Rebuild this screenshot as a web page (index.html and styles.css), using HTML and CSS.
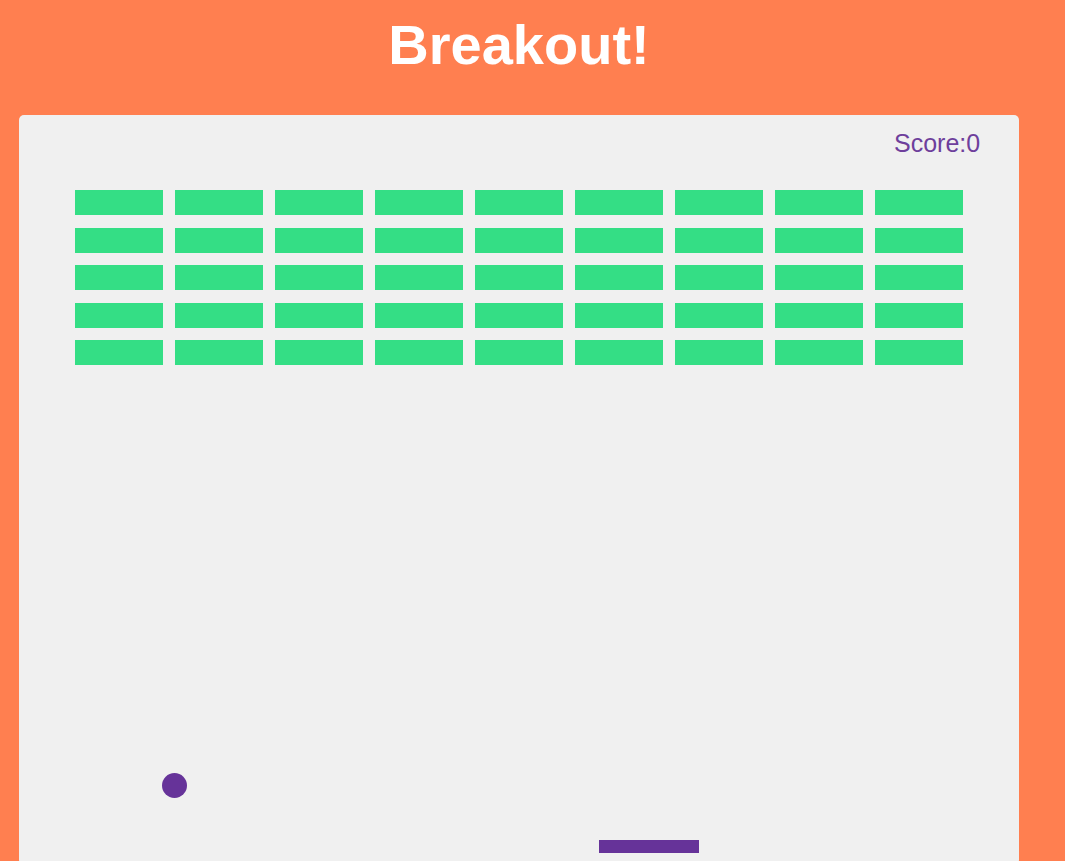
FILE: index.html
```html
<!DOCTYPE html>
<html lang="en">
<head>
<meta charset="utf-8">
<title>Breakout!</title>
<link rel="stylesheet" href="styles.css">
</head>
<body>
  <main class="page">
    <h1 class="title">Breakout!</h1>
    <div class="board">
      <div class="score">Score:0</div>
      <div class="bricks">
        <div class="brick"></div><div class="brick"></div><div class="brick"></div><div class="brick"></div><div class="brick"></div><div class="brick"></div><div class="brick"></div><div class="brick"></div><div class="brick"></div>
        <div class="brick"></div><div class="brick"></div><div class="brick"></div><div class="brick"></div><div class="brick"></div><div class="brick"></div><div class="brick"></div><div class="brick"></div><div class="brick"></div>
        <div class="brick"></div><div class="brick"></div><div class="brick"></div><div class="brick"></div><div class="brick"></div><div class="brick"></div><div class="brick"></div><div class="brick"></div><div class="brick"></div>
        <div class="brick"></div><div class="brick"></div><div class="brick"></div><div class="brick"></div><div class="brick"></div><div class="brick"></div><div class="brick"></div><div class="brick"></div><div class="brick"></div>
        <div class="brick"></div><div class="brick"></div><div class="brick"></div><div class="brick"></div><div class="brick"></div><div class="brick"></div><div class="brick"></div><div class="brick"></div><div class="brick"></div>
      </div>
      <div class="ball"></div>
      <div class="paddle"></div>
    </div>
  </main>
</body>
</html>
```
FILE: styles.css
```css
* { box-sizing: border-box; }

html, body {
  margin: 0;
  padding: 0;
  overflow: hidden;
  background: #ff7f50;
}

body {
  font-family: "Liberation Sans", Arial, Helvetica, sans-serif;
}

.page {
  width: 1000px;
  margin-left: 19px;
  display: flex;
  flex-direction: column;
}

.title {
  margin: 14px 0 39px;
  font-size: 56px;
  line-height: 62px;
  font-weight: 700;
  letter-spacing: 0;
  color: #ffffff;
  text-align: center;
}

.board {
  position: relative;
  width: 1000px;
  height: 750px;
  background: #f0f0f0;
  border-radius: 5px;
  display: flex;
  flex-direction: column;
}

.score {
  margin-top: 16px;
  padding-left: 875px;
  font-size: 25px;
  line-height: 25px;
  color: #6e3f9c;
  white-space: nowrap;
}

.bricks {
  margin-top: 34px;
  margin-left: 56.25px;
  display: grid;
  grid-template-columns: repeat(9, 87.5px);
  grid-auto-rows: 25px;
  column-gap: 12.5px;
  row-gap: 12.5px;
}

.brick {
  background: #34de85;
}

.ball {
  position: absolute;
  left: 142.5px;
  top: 657.5px;
  width: 25px;
  height: 25px;
  border-radius: 50%;
  background: #663399;
}

.paddle {
  position: absolute;
  left: 580px;
  top: 725px;
  width: 100px;
  height: 12.5px;
  background: #663399;
}
```
